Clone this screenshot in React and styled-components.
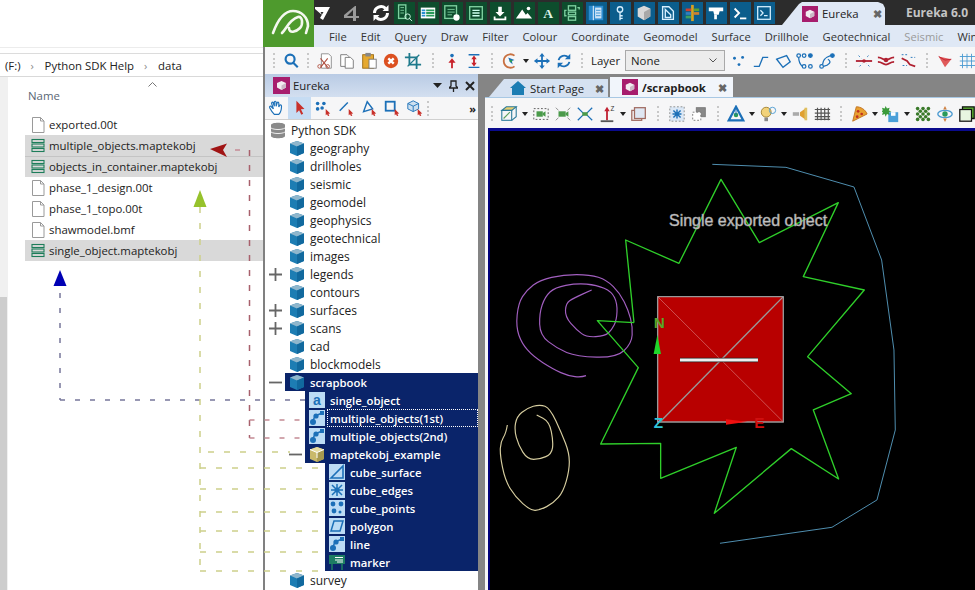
import React from "react";
import styled, { createGlobalStyle } from "styled-components";

const Global = createGlobalStyle`
  html, body { margin: 0; padding: 0; width: 975px; height: 590px; overflow: hidden; background: #fff; }
  body { font-family: "Open Sans", "Noto Sans", sans-serif; font-size: 11.4px; color: #222; }
  * { box-sizing: border-box; }
`;

const Page = styled.div`position: relative; display: flex; width: 975px; height: 590px; overflow: hidden;`;

/* ---------- file explorer ---------- */
const Explorer = styled.section`width: 263px; height: 590px; flex: none; display: flex; flex-direction: column; background: #fff;`;
const TopBlank = styled.div`height: 54px; border-bottom: 1px solid #dcdcdc; position: relative;
  &::before { content: ""; display: block; height: 47px; border-bottom: 1px solid #ececec; }`;
const Address = styled.div`height: 23px; display: flex; align-items: center; gap: 10px; padding-left: 5px; border-bottom: 1px solid #d9d9d9; font-size: 11.4px; color: #222;`;
const Crumb = styled.span`color: #8a8a8a; font-size: 11px; line-height: 1; width: 4px;`;
const ExplorerBody = styled.div`flex: 1; display: flex; min-height: 0;`;
const ScrollStrip = styled.div`width: 8px; background: #f0f0f0; display: flex; flex-direction: column;
  &::before { content: ""; display: block; height: 220px; }
  &::after { content: ""; display: block; flex: 1; width: 7px; background: #cdcdcd; }`;
const FileArea = styled.div`flex: 1; padding-left: 17px; display: flex; flex-direction: column;`;
const NameHeader = styled.div`height: 37px; padding: 11px 0 0 3px; color: #5a6675; font-size: 11.4px; position: relative;`;
const SortCaret = styled.svg`position: absolute; left: 123px; top: 5px;`;
const FileRow = styled.div`height: 21px; display: flex; align-items: center; gap: 4px; padding-left: 6px; font-size: 11.4px; color: #222;
  background: ${p => (p.$hl ? "#d9d9d9" : "transparent")};
  ${p => (p.$line ? "box-shadow: inset 0 1px 0 #c4c4c4;" : "")}`;

/* ---------- application ---------- */
const AppWin = styled.section`flex: 1; min-width: 0; display: flex; flex-direction: column; height: 590px;`;
const Header = styled.header`height: 47px; display: flex; flex: none;`;
const Logo = styled.div`width: 51px; background: #4e9a2d; flex: none; display: flex;`;
const HeaderCol = styled.div`flex: 1; min-width: 0; display: flex; flex-direction: column;`;
const Ribbon = styled.div`height: 25px; background: #2c2c2c; display: flex; align-items: center; overflow: hidden;`;
const RibbonBtn = styled.div`width: ${p => p.$w || 24}px; height: 25px; flex: none; display: flex; align-items: center; justify-content: center;
  & > span { display: flex; align-items: center; justify-content: center; flex: none; width: 21px; height: 22px; background: ${p => p.$bg || "transparent"}; }`;
const AppTab = styled.div`width: 103px; height: 23px; flex: none; margin: 2px 0 0 6px; align-self: flex-end; background: #dfe8f5; display: flex; align-items: center; gap: 4px;
  padding-left: 20px; clip-path: polygon(0 100%, 17px 2px, 20px 0, 96px 0, 101px 2px, 103px 6px, 103px 100%); font-size: 11.4px; color: #222;`;
const TabClose = styled.span`color: #666; font-size: 11px; font-weight: 700; margin-left: ${p => p.$m || 10}px; line-height: 1;`;
const WinTitle = styled.div`margin-left: 21px; color: #c4c4c4; font-weight: 700; font-size: 12px; white-space: nowrap; flex: none;`;
const Menu = styled.nav`height: 22px; background: #dfe8f5; display: flex; align-items: center; gap: 14px; padding-left: 15px; white-space: nowrap; overflow: hidden; font-size: 11.2px; color: #333;`;
const MenuItem = styled.span`color: ${p => (p.$off ? "#9a9a9a" : "#333")};`;

const Tool = styled.div`height: 27px; flex: none; background: #f6f6f7; display: flex; align-items: center; padding-left: 3px; border-left: 2px solid #808080; overflow: hidden;`;
const Cell = styled.div`width: ${p => p.$w || 22}px; height: 22px; flex: none; display: flex; align-items: center; justify-content: center;
  background: ${p => (p.$on ? "#c6dcf3" : "transparent")};`;
const Sep = styled.div`width: ${p => p.$w || 12}px; flex: none; display: flex; justify-content: center;
  &::before { content: ""; height: 15px; border-left: 2px dotted #c8c8c8; }`;
const Caret = styled.div`width: 10px; flex: none; display: flex; justify-content: center;
  &::before { content: ""; border-left: 3px solid transparent; border-right: 3px solid transparent; border-top: 4px solid #222; }`;
const LayerLabel = styled.span`width: 34px; margin-left: 2px; flex: none; color: #222; font-size: 11.4px;`;
const LayerSelect = styled.div`width: 100px; height: 21px; flex: none; border: 1px solid #a9a9a9; background: #ececec; display: flex; align-items: center; justify-content: space-between; padding: 0 7px 0 5px; margin-right: 3px; font-size: 11.4px; color: #222;`;

const Workspace = styled.div`flex: 1; min-height: 0; display: flex; background: #858585; border-left: 2px solid #808080;`;
const Dock = styled.aside`width: 213px; flex: none; display: flex; flex-direction: column; background: #fff; margin-right: 7px;`;
const DockTitle = styled.div`height: 23px; flex: none; display: flex; align-items: center; gap: 3px; padding-left: 8px; background: linear-gradient(#b9cbe4, #d3dff0); font-size: 11.4px; color: #222;`;
const DockCtl = styled.span`margin-left: auto; display: flex; align-items: center; gap: 7px; padding-right: 3px;`;
const DockTool = styled.div`height: 23px; flex: none; display: flex; align-items: center; background: #f6f6f7; border-bottom: 1px solid #d0d0d0; padding-left: 1px;`;
const More = styled.span`margin-left: auto; margin-right: 3px; font-weight: 700; font-size: 11px; color: #222; letter-spacing: -1px;`;
const Tree = styled.div`flex: 1; min-height: 0; padding-top: 1px; overflow: hidden;`;
const Row = styled.div`height: 18px; display: flex; align-items: stretch; padding-left: ${p => (p.$depth > 1 ? (p.$depth - 1) * 20 : 0)}px;`;
const Expander = styled.div`width: ${p => (p.$root ? 1 : 20)}px; flex: none; display: flex; align-items: center; justify-content: center; position: relative; z-index: 3;`;
const Body = styled.div`flex: 1; display: flex; align-items: center; gap: 5px; padding-left: 4px; min-width: 0;
  background: ${p => (p.$sel ? "#0a246a" : "transparent")};`;
const Label = styled.span`font-size: ${p => (p.$sel ? 11.3 : 12)}px; white-space: nowrap;
  color: ${p => (p.$sel ? "#fff" : "#222")}; font-weight: ${p => (p.$sel ? 600 : 400)};`;
const FocusLabel = styled(Label)`flex: 1; align-self: stretch; display: flex; align-items: center; margin-left: -3px; padding-left: 3px; outline: 1px dotted #fff; outline-offset: -1px;`;

const Main = styled.main`flex: 1; min-width: 0; display: flex; flex-direction: column; background: #f6f6f7;`;
const TabBar = styled.div`height: 24px; flex: none; display: flex; align-items: flex-end; padding-left: 4px; background: #858585; border-bottom: 1px solid #a8c8e4;`;
const DocTab = styled.div`height: ${p => (p.$active ? 20 : 18)}px; width: ${p => p.$w}px; flex: none; margin-right: ${p => p.$mr || 0}px; display: flex; align-items: center; gap: 4px; padding-left: ${p => p.$pl}px; white-space: nowrap;
  background: ${p => (p.$active ? "#f1f5fb" : "#d5e1f1")}; font-size: 11.4px; font-weight: ${p => (p.$active ? 700 : 400)}; color: #222;
  clip-path: ${p => (p.$slant ? "polygon(0 100%, 15px 0, 100% 0, 100% 100%)" : "polygon(0 0, 100% 0, 100% 100%, 0 100%)")};`;
const ViewTool = styled.div`height: 30px; flex: none; display: flex; align-items: center; background: #f6f6f7; overflow: hidden; padding: 1px 0 0 1px;`;
const Viewport = styled.div`flex: 1; min-height: 0; margin-left: 3px; background: #000; border-top: 3px solid #0a0a8c; border-left: 2px solid #00007a; overflow: hidden; display: flex;`;
const Overlay = styled.svg`position: absolute; left: 0; top: 0; pointer-events: none; z-index: 2;`;

/* ---------- drawings ---------- */
const W = "#fff";
const G = "#7fd0a0";
const glyphs = {
  undo: <path d="M2 4h15l-7 13-3-2 3.5-6H7.5L9 12 2 6z" fill={W} />,
  redo: <path d="M14 3L3 12v3h9v3h3v-3h3v-2h-3V3zm-2 4v6H6z" fill="#9a9a9a" />,
  refresh: <g fill="none" stroke={W} strokeWidth="3"><path d="M3.5 10a6.5 6.5 0 0 1 11-4.6" /><path d="M16.5 10a6.5 6.5 0 0 1-11 4.6" /><path d="M17.5 2v6h-6z" fill={W} stroke="none" /><path d="M2.5 18v-6h6z" fill={W} stroke="none" /></g>,
  tbl: <g><rect x="4" y="1" width="8" height="15" fill="none" stroke={G} strokeWidth="1.5" /><path d="M6 4h4M6 7h4M6 10h4" stroke={G} /><circle cx="14" cy="14" r="3" fill="none" stroke="#dfe" /><path d="M16 16l3 3" stroke="#dfe" /></g>,
  grid: <g><rect x="2" y="4" width="16" height="12" fill="#fff" /><path d="M3 6h4v2H3zM3 9h4v2H3zM3 12h4v2H3z" fill="#2a8fd0" /><path d="M8 6h9v2H8zM8 9h9v2H8zM8 12h9v2H8z" fill="#2a9a5a" /></g>,
  listgear: <g><rect x="2" y="2" width="13" height="14" fill="none" stroke={G} strokeWidth="1.5" /><path d="M5 6h8M5 9h8M5 12h5" stroke={G} /><circle cx="15" cy="15" r="3.5" fill="#fff" /></g>,
  form: <g><rect x="3" y="3" width="14" height="14" fill="none" stroke={G} strokeWidth="1.5" /><path d="M6 7h8M6 10h8M6 13h8" stroke="#cfe" strokeWidth="1.5" /></g>,
  down: <g fill={W}><path d="M8 3h4v6h3l-5 5-5-5h3z" /><path d="M3 14h2v2h10v-2h2v4H3z" /></g>,
  mount: <g fill={W}><path d="M1 16l7-10 4 6 2-2 5 6z" /><circle cx="15" cy="5" r="2" /></g>,
  A: <text x="10" y="16" textAnchor="middle" fontFamily="Liberation Serif, serif" fontSize="15" fontWeight="700" fill="#dff5e8">A</text>,
  tree: <g fill="none" stroke={G} strokeWidth="1.5"><rect x="6" y="2" width="8" height="5" /><rect x="6" y="9" width="8" height="3" /><rect x="6" y="14" width="8" height="4" /><path d="M4 7H2v6h2M16 4h2v2" /></g>,
  panel: <g><rect x="2" y="2" width="16" height="16" fill="#2d8cd0" /><path d="M7 2v16" stroke="#fff" /><rect x="9" y="4" width="7" height="12" fill="#cfe5f8" /><path d="M10 7h5M10 10h5M10 13h5" stroke="#2d8cd0" /></g>,
  pin: <g fill="none" stroke="#d8f0ff" strokeWidth="1.5"><circle cx="10" cy="6" r="3" /><path d="M10 9v9M10 13h3M10 16h3" /></g>,
  box: <g><path d="M10 2l7 3v9l-7 4-7-4V5z" fill="#d8d8d8" /><path d="M10 9l7-4v9l-7 4z" fill="#a8a8a8" /></g>,
  doc: <g fill="none" stroke="#d8f0ff" strokeWidth="1.5"><path d="M4 3h7l5 5v9H4z" /><path d="M7 6l6 6v3H7z" /></g>,
  color: <g><rect x="9" y="1" width="3" height="18" fill="#d8a020" /><path d="M3 5h6v3H3z" fill="#d04030" /><path d="M12 5h6v3h-6z" fill="#5ca030" /><path d="M3 9h6v3H3z" fill="#3080c0" /><path d="M12 9h6v3h-6z" fill="#d08030" /><path d="M3 13h6v3H3z" fill="#40a060" /></g>,
  tbar: <g fill="#fff"><path d="M2 4h16v4h-4l-1 4H8L7 8H2z" /><path d="M8 12h3v5H8z" /></g>,
  prompt: <g fill="none" stroke="#fff" strokeWidth="2"><path d="M4 5l5 5-5 5" /><path d="M10 16h7" /></g>,
  console: <g fill="none" stroke="#d8f0ff" strokeWidth="1.4"><rect x="3" y="3" width="14" height="14" /><path d="M6 7l3 3-3 3M10 13h4" /></g>,
  search: <g fill="none" stroke="#1c70b8" strokeWidth="2.4"><circle cx="9" cy="8" r="5" /><path d="M12.5 12l5 5" /></g>,
  cut: <g fill="none" stroke="#8a8a8a"><path d="M6 2h8l3 3v13H6z" fill="#fff" /><path d="M5 7l8 10M13 7L5 17" stroke="#b05040" strokeWidth="1.2" /><circle cx="4" cy="16" r="2" stroke="#b05040" /><circle cx="13" cy="16" r="2" stroke="#b05040" /></g>,
  copy: <g fill="#fff" stroke="#777"><path d="M3 3h7l2 2v11H3z" /><path d="M8 6h6l3 3v9H8z" /></g>,
  paste: <g><rect x="3" y="3" width="12" height="15" fill="#e6a92f" stroke="#9a6a10" /><rect x="6" y="1" width="6" height="4" fill="#888" /><rect x="10" y="8" width="8" height="10" fill="#fff" stroke="#777" /></g>,
  del: <g><circle cx="10" cy="10" r="8" fill="#dc5020" /><path d="M7 7l6 6M13 7l-6 6" stroke="#fff" strokeWidth="2.6" /></g>,
  crop: <g fill="none" stroke="#1f7a8c" strokeWidth="2"><path d="M6 1v13h13" /><path d="M1 6h13v13" /><path d="M4 16L17 3" strokeWidth="1.4" /></g>,
  info: <g fill="#c8222a"><circle cx="10" cy="4" r="2" fill="#1c70b8" /><path d="M10 7l4 5h-3v6H9v-6H6z" /></g>,
  height: <g><path d="M4 3h12M4 17h12" stroke="#1c70b8" strokeWidth="1.5" /><path d="M10 4l3 4h-2v4h2l-3 4-3-4h2V8H7z" fill="#c8222a" /></g>,
  target: <g><path d="M15 4a7.5 7.5 0 1 0 0 12" fill="none" stroke="#c87040" strokeWidth="2" /><path d="M8 6l7 3-3 1 1 4-3-3z" fill="#1c70b8" /><circle cx="11" cy="10" r="1.5" fill="#2a9a5a" /></g>,
  move: <g fill="#1c70b8"><path d="M10 1l3 4h-2v4h4V7l4 3-4 3v-2h-4v4h2l-3 4-3-4h2v-4H5v2l-4-3 4-3v2h4V5H7z" /></g>,
  cycle: <g fill="none" stroke="#1c70b8" strokeWidth="2"><path d="M4 9a6.5 6.5 0 0 1 11-3" /><path d="M16 11a6.5 6.5 0 0 1-11 3" /><path d="M17 2v6h-6zM3 18v-6h6z" fill="#1c70b8" stroke="none" /></g>,
  pts: <g fill="#1c70b8"><circle cx="5" cy="7" r="1.6" /><circle cx="14" cy="6" r="1.6" /><circle cx="10" cy="14" r="1.6" /></g>,
  stepline: <path d="M2 16h6l4-10h6" fill="none" stroke="#1c70b8" strokeWidth="1.5" />,
  poly: <path d="M3 8l11-4 4 7-8 6z" fill="none" stroke="#1c70b8" strokeWidth="1.5" />,
  nodes: <g fill="none" stroke="#1c70b8" strokeWidth="1.4"><circle cx="3" cy="4" r="2" /><circle cx="9" cy="4" r="2" /><circle cx="16" cy="4" r="2" fill="#1c70b8" /><circle cx="9" cy="16" r="2" /><circle cx="16" cy="16" r="2" /><path d="M3 6c0 6 3 9 4 10" /></g>,
  spline: <g fill="none" stroke="#1c70b8" strokeWidth="1.4"><circle cx="4" cy="16" r="2" /><circle cx="16" cy="4" r="2" fill="#1c70b8" /><path d="M5 14c1-8 6-9 9-10M6 16c6-1 10-5 5-8" /></g>,
  redline1: <g><path d="M1 10h18" stroke="#b02030" strokeWidth="2" /><path d="M4 4l3 3M15 4l-2 2M5 16l3-3M16 16l-3-3" stroke="#1c70b8" strokeDasharray="2 2" /><circle cx="10" cy="10" r="2" fill="#b02030" /></g>,
  redline2: <g fill="none" stroke="#b02030" strokeWidth="2"><path d="M1 6c5 0 5 3 9 3s4-3 9-3" /><path d="M1 11c5 0 5 3 9 3s4-3 9-3" /><circle cx="10" cy="9" r="1.5" /></g>,
  redline3: <g fill="none" stroke="#b02030" strokeWidth="2"><path d="M3 7l6 3 3 4 6 2" /><path d="M3 3h6M13 6h5M4 15h5" stroke="#1c70b8" strokeWidth="1" strokeDasharray="2 2" /></g>,
  funnel: <g><path d="M3 5l14 3-7 9z" fill="#e05a5a" /><path d="M3 5l7 4 7-1" fill="none" stroke="#c02030" /></g>,
  gridBlue: <g fill="none" stroke="#4a9ad0"><path d="M5 2v16M10 2v16M15 2v16M2 5h18M2 10h18M2 15h18" /></g>,
  cubeWire: <g fill="none" stroke="#2a7a9a" strokeWidth="1.2"><path d="M2 6l5-4h11l-5 4z" fill="#e8cf70" /><rect x="2" y="6" width="11" height="11" /><path d="M18 2v11l-5 4" /><path d="M4 15l7-7" stroke="#5aa05a" /></g>,
  cam1: <g><rect x="2" y="4" width="16" height="12" fill="none" stroke="#555" strokeDasharray="2 2" /><rect x="5" y="7" width="7" height="6" fill="#4a9a4a" /><path d="M12 9l3-2v6l-3-2z" fill="#4a9a4a" /></g>,
  cam2: <g stroke="#888"><path d="M2 3l3 3M18 3l-3 3M2 17l3-3M18 17l-3-3" /><rect x="5" y="7" width="8" height="6" fill="#4a9a4a" stroke="none" /><path d="M13 9l3-2v6l-3-2z" fill="#4a9a4a" stroke="none" /></g>,
  cam3: <g stroke="#1c70b8" strokeWidth="1.4"><path d="M2 3l6 6M18 3l-6 6M2 17l6-6M18 17l-6-6" /><rect x="7" y="8" width="6" height="4" fill="#4a9a4a" stroke="none" /></g>,
  axis: <g><path d="M10 17V5" stroke="#c02030" strokeWidth="2" /><path d="M10 2l3 5H7z" fill="#c02030" /><path d="M3 18h14" stroke="#555" strokeWidth="2" /><text x="14" y="7" fontSize="7" fontFamily="Liberation Sans" fill="#333">Z</text></g>,
  stack: <g fill="none" stroke="#a06a60" strokeWidth="1.4"><rect x="2" y="6" width="11" height="11" /><rect x="5" y="3" width="12" height="12" fill="#dfe7f3" /></g>,
  star: <g><rect x="2" y="2" width="16" height="16" fill="#dbe8f6" stroke="#888" strokeDasharray="2 2" /><path d="M10 5v10M5 10h10M6 6l8 8M14 6l-8 8" stroke="#1c70b8" strokeWidth="1.6" /></g>,
  overlapB: <g fill="none" stroke="#777"><rect x="7" y="3" width="10" height="10" fill="#888" /><rect x="3" y="8" width="9" height="9" strokeDasharray="2 2" fill="#fff" /></g>,
  triA: <g><path d="M10 2l8 15H2z" fill="none" stroke="#1c70b8" strokeWidth="2.5" /><circle cx="10" cy="11" r="2.5" fill="#2a9a5a" /><path d="M10 3v8" stroke="#1c70b8" /></g>,
  bulb: <g><circle cx="8" cy="8" r="5.5" fill="#f2d27a" stroke="#a08030" /><path d="M6 14h4v4H6z" fill="#888" /><circle cx="15" cy="6" r="3.5" fill="none" stroke="#4a9ad0" /></g>,
  horn: <g><rect x="2" y="8" width="7" height="4" fill="#aaa" /><path d="M10 8l6-4v12l-6-4z" fill="#e0a030" /><rect x="15" y="3" width="3" height="14" fill="#e0c060" /></g>,
  hash: <g stroke="#555" strokeWidth="1.3"><path d="M5 3v14M9 3v14M13 3v14M17 3v14M2 5h17M2 9h17M2 13h17M2 16h17" /></g>,
  pizza: <g><path d="M3 18L7 2c5 0 10 3 12 8z" fill="#e8a030" stroke="#c07020" /><circle cx="9" cy="7" r="1.5" fill="#c03020" /><circle cx="13" cy="10" r="1.5" fill="#c03020" /><circle cx="8" cy="13" r="1.5" fill="#c03020" /></g>,
  floppy: <g><rect x="7" y="8" width="11" height="11" fill="#4aa0d8" /><rect x="10" y="8" width="5" height="4" fill="#fff" /><path d="M4 1l1.500 3 3-1-1 3 3 1-3 1 1 3-3-1-1.500 3-1-3-3 1 1-3-2-1 2-1-1-3 3 1z" fill="#3a9a3a" /></g>,
  dots: <g fill="#3a7a2a"><circle cx="4" cy="4" r="2" /><circle cx="10" cy="4" r="2" /><circle cx="16" cy="4" r="2" /><circle cx="7" cy="7" r="2" /><circle cx="13" cy="7" r="2" /><circle cx="4" cy="10" r="2" /><circle cx="10" cy="10" r="2" /><circle cx="16" cy="10" r="2" /><circle cx="7" cy="13" r="2" /><circle cx="13" cy="13" r="2" /><circle cx="4" cy="16" r="2" /><circle cx="10" cy="16" r="2" /><circle cx="16" cy="16" r="2" /></g>,
  orbit: <g><circle cx="10" cy="10" r="3" fill="#2a9a5a" /><ellipse cx="10" cy="10" rx="8" ry="4" fill="none" stroke="#4a9ad0" strokeWidth="1.5" /><path d="M10 1l2 4H8zM10 19l2-4H8z" fill="#d08040" /></g>,
  cubeGreen: <g stroke="#111" strokeWidth="1.4"><path d="M5 2h13v13H5z" fill="#5cb030" /><rect x="2" y="5" width="13" height="13" fill="#e8f5e0" /></g>,
  hand: <path d="M7 17c-2-2-4-5-5-7s1-3 2-1l2 2-2-6c0-2 2-2 2 0l1 3V4c0-2 2-2 2 0v4l1-3c0-2 2-2 2 0v4l1-2c1-1 2 0 2 1 0 3-1 7-3 9z" fill="#fff" stroke="#1c70b8" strokeWidth="1.3" />,
  arrow: <path d="M6 2l9 9-4 .5 2.5 5-2 1-2.5-5-3 3z" fill="#c8302a" />,
  ptsR: <g><g fill="#1c70b8"><circle cx="4" cy="5" r="2" /><circle cx="11" cy="5" r="2" /><circle cx="4" cy="11" r="2" /><circle cx="9" cy="10" r="2" /></g><path d="M13 11l5 5-2 .5 1 2-1.5.5-1-2-1.5 1z" fill="#c8302a" /></g>,
  lineR: <g><path d="M3 13L12 4" stroke="#1c70b8" strokeWidth="1.6" /><path d="M13 11l5 5-2 .5 1 2-1.5.5-1-2-1.5 1z" fill="#c8302a" /></g>,
  polyR: <g><path d="M8 3l6 8-10 3z" fill="none" stroke="#1c70b8" strokeWidth="1.6" /><path d="M13 11l5 5-2 .5 1 2-1.5.5-1-2-1.5 1z" fill="#c8302a" /></g>,
  rectR: <g><rect x="3" y="3" width="10" height="10" fill="none" stroke="#1c70b8" strokeWidth="2" /><path d="M13 11l5 5-2 .5 1 2-1.5.5-1-2-1.5 1z" fill="#c8302a" /></g>,
  cubeR: <g><path d="M8 2l6 3v6l-6 3-6-3V5z" fill="#cde0f0" stroke="#1c70b8" /><path d="M8 8v6M2 5l6 3 6-3" fill="none" stroke="#1c70b8" /><path d="M13 11l5 5-2 .5 1 2-1.5.5-1-2-1.5 1z" fill="#c8302a" /></g>,
};
const Glyph = ({ n, s = 18 }) => <svg width={s} height={s} viewBox="0 0 20 20">{glyphs[n]}</svg>;

const Cube = ({ tan }) => (
  <svg width="16" height="17" viewBox="0 0 16 17">
    <path d="M8 1l7 2.5v9.5L8 16 1 13V3.500z" fill={tan ? "#c9b96a" : "#1d7db3"} />
    <path d="M8 1l7 2.500-7 3-7-3z" fill={tan ? "#e6dca0" : "#8fb6cc"} />
    <path d="M8 6.500L15 3.500v9.500L8 16z" fill={tan ? "#a89a50" : "#11699e"} />
    {tan && <path d="M8 6.500V12M1 3.500l7 3 7-3" stroke="#fff" fill="none" />}
  </svg>
);
const Square = ({ children }) => (
  <svg width="16" height="16" viewBox="0 0 16 16"><rect width="16" height="16" fill="#bcdcf5" />{children}</svg>
);
const NodeIcon = () => (
  <Square>
    <path d="M3 13L6 6l7-3" stroke="#1c70b8" strokeWidth="1.5" fill="none" />
    <circle cx="4" cy="12" r="3" fill="#1c70b8" /><circle cx="7" cy="6" r="2.600" fill="#1c70b8" /><rect x="11" y="1" width="4" height="4" fill="#1c70b8" />
  </Square>
);
const nodeIcons = {
  text: <Square><text x="8" y="12.500" textAnchor="middle" fontSize="14" fontWeight="700" fontFamily="Liberation Sans" fill="#1c70b8">a</text></Square>,
  node: <NodeIcon />,
  tri: <Square><path d="M2 14L14 2v12z" fill="none" stroke="#1c70b8" strokeWidth="1.600" /></Square>,
  edges: <Square><path d="M3 3l10 10M13 3L3 13M8 2v12M2 8h12" stroke="#1c70b8" strokeWidth="1.500" /><circle cx="8" cy="8" r="2.500" fill="#1c70b8" /></Square>,
  points: <Square><circle cx="4" cy="4" r="2.400" fill="#1c70b8" /><circle cx="12" cy="4" r="2.400" fill="#1c70b8" /><circle cx="5" cy="11" r="2.400" fill="#1c70b8" /><circle cx="11" cy="12" r="1.500" fill="#1c70b8" /></Square>,
  para: <Square><path d="M5 3h9l-3 10H2z" fill="none" stroke="#1c70b8" strokeWidth="1.500" /></Square>,
  marker: <svg width="16" height="16" viewBox="0 0 16 16"><rect y="1" width="16" height="9" fill="#1d7d63" /><path d="M6 3.500h8M6 6h8M8 8h6" stroke="#fff" /><path d="M3 10v6M13 10v6" stroke="#1d7d63" strokeWidth="1.500" /></svg>,
  db: <svg width="16" height="17" viewBox="0 0 16 17"><path d="M1 3c0-3 14-3 14 0v11c0 3-14 3-14 0z" fill="#8a8a8a" /><path d="M1 6c3 2 11 2 14 0M1 10c3 2 11 2 14 0" stroke="#eee" fill="none" /></svg>,
};
const Eureka = ({ s = 17 }) => (
  <svg width={s} height={s} viewBox="0 0 17 17"><rect width="17" height="17" fill="#a71d6d" /><path d="M8.500 4l4.500 2v4.500L8.500 13 4 10.500V6z" fill="#f2ecf0" /><path d="M8.500 8.500L13 6v4.500L8.500 13z" fill="#cbb8c6" /></svg>
);
const PlusMinus = ({ plus }) => (
  <svg width="13" height="13" viewBox="0 0 13 13"><path d={plus ? "M0 6.500h13M6.500 0v13" : "M0 6.500h13"} stroke="#666" strokeWidth="1.800" /></svg>
);
const FileIcon = ({ k }) => k === "data" ? (
  <svg width="14" height="15" viewBox="0 0 14 15" fill="none" stroke="#1d7d5a" strokeWidth="1.100"><rect x="1" y="1.500" width="12" height="3" /><rect x="1" y="6" width="12" height="3" /><rect x="1" y="10.500" width="12" height="3" /></svg>
) : (
  <svg width="14" height="16" viewBox="0 0 14 16"><path d="M1.500.500h8l3.500 3.500v11.500H1.500z" fill="#fff" stroke="#9a9a9a" /><path d="M9.500.500V4H13" fill="none" stroke="#9a9a9a" /></svg>
);

const files = [
  ["exported.00t"], ["multiple_objects.maptekobj", "data", 1], ["objects_in_container.maptekobj", "data", 1, 1],
  ["phase_1_design.00t"], ["phase_1_topo.00t"], ["shawmodel.bmf"], ["single_object.maptekobj", "data", 1],
];
const ribbon = [
  ["undo", 18], ["redo", 38], ["refresh", 22],
  ...["tbl", "grid", "listgear", "form", "down", "mount", "A", "tree"].map(n => [n, 24, "#0d4d2d"]),
  ...["panel", "pin", "box", "doc", "color", "tbar", "prompt", "console"].map(n => [n, 24, "#0b5d8c"]),
];
const menu = ["File", "Edit", "Query", "Draw", "Filter", "Colour", "Coordinate", "Geomodel", "Surface", "Drillhole", "Geotechnical"];
const tree = [
  { t: "Python SDK", d: 0, i: "db" },
  ...["geography", "drillholes", "seismic", "geomodel", "geophysics", "geotechnical", "images"].map(t => ({ t, d: 1 })),
  { t: "legends", d: 1, x: "+" }, { t: "contours", d: 1 }, { t: "surfaces", d: 1, x: "+" }, { t: "scans", d: 1, x: "+" },
  { t: "cad", d: 1 }, { t: "blockmodels", d: 1 },
  { t: "scrapbook", d: 1, x: "-", s: 1 },
  { t: "single_object", d: 2, i: "text", s: 1 },
  { t: "multiple_objects(1st)", d: 2, i: "node", s: 1, f: 1 },
  { t: "multiple_objects(2nd)", d: 2, i: "node", s: 1 },
  { t: "maptekobj_example", d: 2, x: "-", tan: 1, s: 1 },
  { t: "cube_surface", d: 3, i: "tri", s: 1 }, { t: "cube_edges", d: 3, i: "edges", s: 1 },
  { t: "cube_points", d: 3, i: "points", s: 1 }, { t: "polygon", d: 3, i: "para", s: 1 },
  { t: "line", d: 3, i: "node", s: 1 }, { t: "marker", d: 3, i: "marker", s: 1 },
  { t: "survey", d: 1 },
];
const Cells = ({ list, w }) => list.map((n, i) => <Cell key={i} $w={w}><Glyph n={n} /></Cell>);

/* Smooths a hand-drawn polyline through the midpoints of its segments. */
const smooth = pts => {
  const p = pts.trim().split(/\s+/).map(s => s.split(",").map(Number));
  let d = `M${p[0][0]} ${p[0][1]}`;
  for (let i = 1; i < p.length - 1; i++) {
    d += `Q${p[i][0]} ${p[i][1]} ${(p[i][0] + p[i + 1][0]) / 2} ${(p[i][1] + p[i + 1][1]) / 2}`;
  }
  const l = p[p.length - 1];
  return `${d}L${l[0]} ${l[1]}`;
};
const purple = "288,737 275,742 235,738 190,718 130,680 95,640 78,590 85,520 110,480 150,450 220,434 300,434 350,450 390,490 415,540 428,590 425,640 380,683 260,680 200,655 150,615 148,550 165,500 195,472 260,460 320,465 365,485 382,520 380,570 365,600 345,618 290,622 260,600 225,560 228,520 250,505 305,480";
const beige = "52,885 48,910 32,935 30,975 45,1050 75,1100 122,1142 150,1140 190,1120 220,1085 238,1020 238,970 215,910 180,835 150,823 110,835 80,860 73,900 85,945 112,988 150,988 185,972 190,935 178,875 140,855";

const Scene = () => (
  <svg width="485" height="459" viewBox="0 0 485 459">
    <g transform="translate(0 -1) scale(.3333)" fill="none" strokeLinejoin="round">
      <polyline stroke="#4f8fb0" strokeWidth="3" points="667,103 888,112 1092,171 1175,390 1212,660 1216,900 1161,1110 1026,1192 690,1240" />
      <path stroke="#a25fc0" strokeWidth="3.500" d={smooth(purple)} />
      <path stroke="#d6cd9f" strokeWidth="3.500" d={smooth(beige)} />
      <rect x="503" y="500" width="377" height="376" fill="#b80000" stroke="#999" strokeWidth="4" />
      <path d="M503 500L880 876" stroke="#d97a7a" strokeWidth="2" />
      <path d="M880 500L510 876" stroke="#999" strokeWidth="4" />
      <polyline stroke="#2fcf2a" strokeWidth="4" points="432,578 407,330 567,400 693,148 808,338 1045,218 940,440 1123,480 953,680 1084,791 970,840 1046,1047 904,956 673,1150 739,952 512,1045 512,940 332,942 445,713 322,572 432,578" />
      <path d="M570 690H804" stroke="#222" strokeWidth="14" />
      <path d="M570 690H804" stroke="#eee" strokeWidth="9" />
      <path d="M502 615L513 672H491z" fill="#1fd62a" />
      <path d="M708 868L772 875L708 884z" fill="#f01010" />
      <text x="491" y="595" fontFamily="Liberation Sans, sans-serif" fontSize="46" fontWeight="700" fill="#5aa52a">N</text>
      <text x="491" y="894" fontFamily="Liberation Sans, sans-serif" fontSize="46" fontWeight="700" fill="#2fc4d8">Z</text>
      <text x="793" y="894" fontFamily="Liberation Sans, sans-serif" fontSize="46" fontWeight="700" fill="#d01010">E</text>
      <text x="537" y="288" fontFamily="Liberation Sans, sans-serif" fontSize="48" fill="#cfcfcf" stroke="#9a9a9a" strokeWidth="1.600">Single exported object</text>
    </g>
  </svg>
);

const dashRed = { stroke: "#c48a94", strokeWidth: 1.5, strokeDasharray: "5 10", fill: "none" };
const dashRedV = { ...dashRed, stroke: "#a8606c", strokeDasharray: "6 9" };
const dashBlue = { stroke: "#77779b", strokeWidth: 1.5, strokeDasharray: "5 10", fill: "none" };
const dashGreen = { stroke: "#cdd08a", strokeWidth: 1.5, strokeDasharray: "6 10", fill: "none" };

export default function App() {
  return (
    <Page>
      <Global />
      <Explorer>
        <TopBlank />
        <Address>
          <span>(F:)</span><Crumb>›</Crumb><span>Python SDK Help</span><Crumb>›</Crumb><span>data</span>
        </Address>
        <ExplorerBody>
          <ScrollStrip />
          <FileArea>
            <NameHeader>
              Name
              <SortCaret width="9" height="5" viewBox="0 0 9 5"><path d="M.5 4.500L4.500 .5l4 4" fill="none" stroke="#777" /></SortCaret>
            </NameHeader>
            {files.map(([n, k, hl, line]) => (
              <FileRow key={n} $hl={hl} $line={line}><FileIcon k={k} /><span>{n}</span></FileRow>
            ))}
          </FileArea>
        </ExplorerBody>
      </Explorer>

      <AppWin>
        <Header>
          <Logo>
            <svg width="51" height="47" viewBox="0 0 51 47" fill="none" stroke="#f4f8ef" strokeWidth="2.600" strokeLinecap="round">
              <path d="M10 33C14 22 20 11 30 11c8 0 15 6 15 15l-2 7" />
              <path d="M19 33c5-5 7-13 16-16 5-1 5 8 2 11-4 4-11 6-11 0" />
            </svg>
          </Logo>
          <HeaderCol>
            <Ribbon>
              {ribbon.map(([n, w, bg], i) => (
                <RibbonBtn key={i} $w={w} $bg={bg}><span><Glyph n={n} s={bg ? 18 : 20} /></span></RibbonBtn>
              ))}
              <AppTab>
                <Eureka s={16} /><span>Eureka</span><TabClose>✖</TabClose>
              </AppTab>
              <WinTitle>Eureka 6.0</WinTitle>
            </Ribbon>
            <Menu>
              {menu.map(m => <MenuItem key={m}>{m}</MenuItem>)}
              <MenuItem $off>Seismic</MenuItem>
              <MenuItem>Window</MenuItem>
            </Menu>
          </HeaderCol>
        </Header>

        <Tool>
          <Sep /><Cells list={["search"]} /><Sep /><Cells list={["cut", "copy", "paste", "del", "crop"]} />
          <Sep $w={17} /><Cells list={["info", "height"]} /><Sep $w={14} /><Cells list={["target"]} /><Caret />
          <Cells list={["move", "cycle"]} /><Sep $w={14} />
          <LayerLabel>Layer</LayerLabel>
          <LayerSelect>
            <span>None</span>
            <svg width="8" height="5" viewBox="0 0 8 5"><path d="M.5.5L4 4 7.500.5" fill="none" stroke="#555" /></svg>
          </LayerSelect>
          <Cells list={["pts", "stepline", "poly", "nodes", "spline"]} /><Sep $w={15} />
          <Cells list={["redline1", "redline2", "redline3"]} /><Sep $w={15} />
          <Cells list={["funnel", "gridBlue"]} />
        </Tool>

        <Workspace>
          <Dock>
            <DockTitle>
              <Eureka /><span>Eureka</span>
              <DockCtl>
                <svg width="9" height="5" viewBox="0 0 9 5"><path d="M0 0h9L4.500 5z" fill="#222" /></svg>
                <svg width="9" height="12" viewBox="0 0 9 12"><path d="M2 1h5v5l2 2H0l2-2zM4.500 8v4" fill="none" stroke="#222" strokeWidth="1.300" /></svg>
                <svg width="10" height="10" viewBox="0 0 10 10"><path d="M1 1l8 8M9 1L1 9" stroke="#222" strokeWidth="2" /></svg>
              </DockCtl>
            </DockTitle>
            <DockTool>
              <Cell $w={22}><Glyph n="hand" /></Cell>
              <Cell $w={23} $on><Glyph n="arrow" /></Cell>
              <Cells list={["ptsR", "lineR", "polyR", "rectR", "cubeR"]} w={23} />
              <Sep $w={4} />
              <More>»</More>
            </DockTool>
            <Tree>
              {tree.map(r => {
                const icon = r.i ? nodeIcons[r.i] : <Cube tan={r.tan} />;
                const L = r.f ? FocusLabel : Label;
                return (
                  <Row key={r.t} $depth={r.d}>
                    <Expander $root={r.d === 0}>{r.x && <PlusMinus plus={r.x === "+"} />}</Expander>
                    <Body $sel={r.s}>{icon}<L $sel={r.s}>{r.t}</L></Body>
                  </Row>
                );
              })}
            </Tree>
          </Dock>

          <Main>
            <TabBar>
              <DocTab $w={119} $mr={2} $pl={21} $slant>
                <svg width="16" height="14" viewBox="0 0 16 14"><path d="M8 0l8 7h-2v7H2V7H0z" fill="#1c7db3" /></svg>
                <span>Start Page</span><TabClose $m={7}>✖</TabClose>
              </DocTab>
              <DocTab $w={123} $pl={12} $active>
                <Eureka s={16} /><span>/scrapbook</span><TabClose $m={8}>✖</TabClose>
              </DocTab>
            </TabBar>
            <ViewTool>
              <Sep /><Cells list={["cubeWire"]} /><Caret /><Cells list={["cam1", "cam2", "cam3", "axis"]} /><Caret /><Cells list={["stack"]} />
              <Sep $w={16} /><Cells list={["star", "overlapB"]} /><Sep $w={15} /><Cells list={["triA"]} /><Caret />
              <Cells list={["bulb"]} /><Caret /><Cells list={["horn", "hash"]} /><Sep $w={15} />
              <Cells list={["pizza"]} /><Caret /><Cells list={["floppy"]} /><Caret /><Cells list={["dots", "orbit", "cubeGreen"]} />
            </ViewTool>
            <Viewport><Scene /></Viewport>
          </Main>
        </Workspace>
      </AppWin>

      <Overlay width="975" height="590" viewBox="0 0 975 590">
        <path d="M210 149L227 143.500L223 150L227 157z" fill="#a01414" />
        <path d="M235 150H250" {...dashRed} />
        <path d="M249.500 150V438" {...dashRedV} />
        <path d="M249.500 420H305M249.500 438H305" {...dashRed} />
        <path d="M60 270L66.500 286H53.500z" fill="#0000b4" />
        <path d="M60 293V400" {...dashBlue} />
        <path d="M60 400H305" {...dashBlue} />
        <path d="M200 190L206.500 207H193.500z" fill="#96c22c" />
        <path d="M200 207V572" {...dashGreen} />
        <path d="M208 452H290M200 468H325M200 489H325M200 512H325M200 531H325M200 552H325M200 571H325" {...dashGreen} />
      </Overlay>
    </Page>
  );
}
